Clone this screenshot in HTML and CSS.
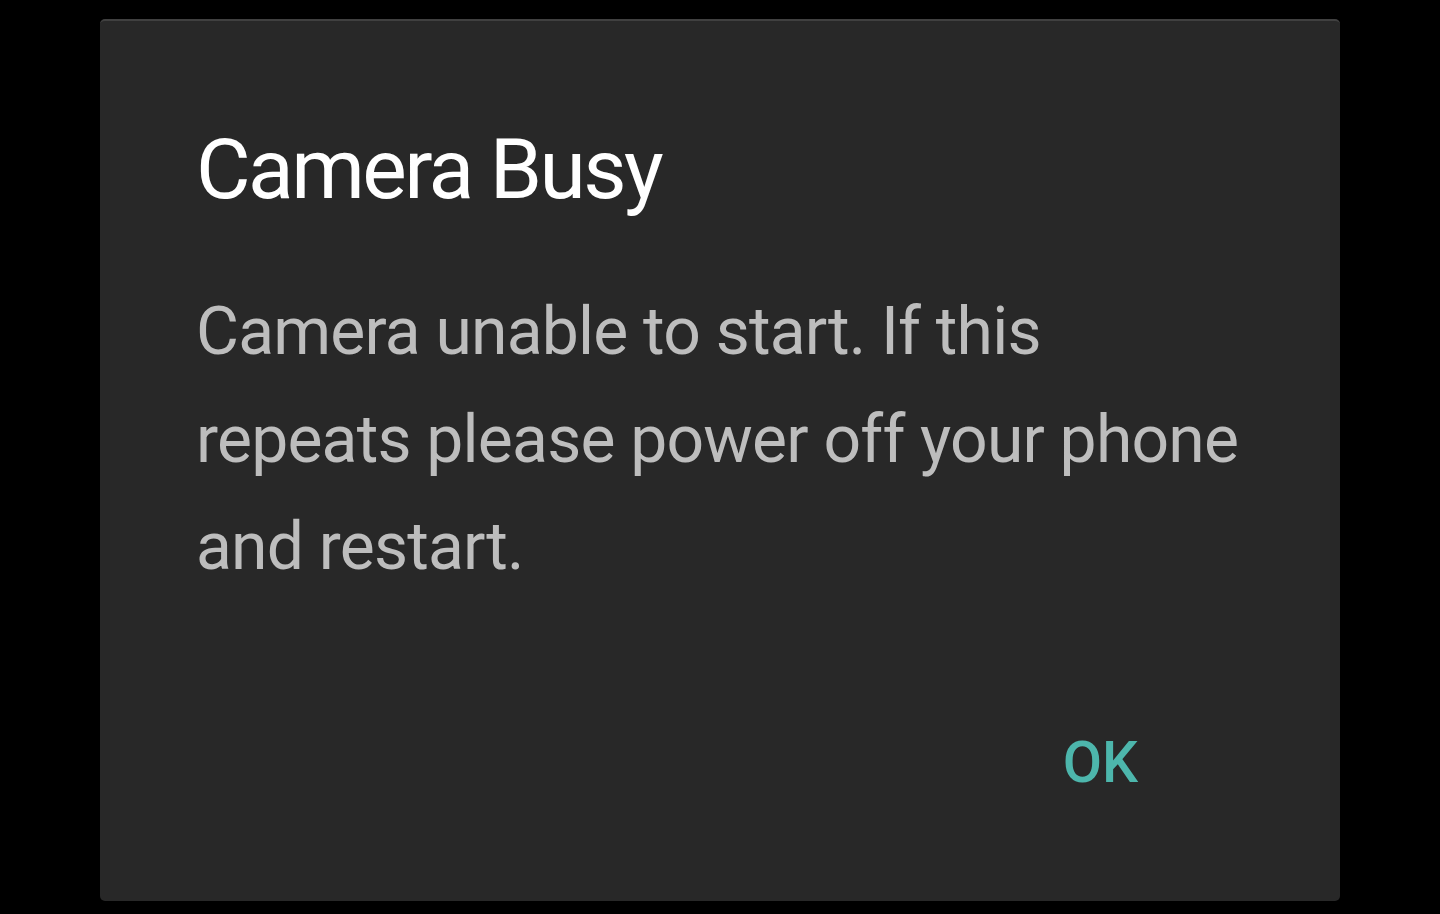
FILE: index.html
```html
<!DOCTYPE html>
<html>
<head>
<meta charset="utf-8">
<link rel="stylesheet" href="styles.css">
</head>
<body>
<div class="dialog">
  <h1 class="title">Camera Busy</h1>
  <p class="message">Camera unable to start. If this repeats please power off your phone and restart.</p>
  <div class="actions">
    <span class="btn">OK</span>
  </div>
</div>
</body>
</html>
```

FILE: styles.css
```css
html, body {
  margin: 0;
  padding: 0;
  background: #000;
  width: 1440px;
  height: 914px;
  overflow: hidden;
}
body {
  padding-top: 19px;
  padding-left: 100px;
  box-sizing: border-box;
  font-family: Roboto, "Noto Sans", sans-serif;
}
.dialog {
  width: 1240px;
  height: 882px;
  box-sizing: border-box;
  background: #282828;
  border-radius: 5px;
  border-top: 2px solid #404040;
  box-shadow: 0 1px 3px rgba(0,0,0,0.6);
  padding: 0 80px 0 96px;
  display: flex;
  flex-direction: column;
}
.title {
  margin: 0;
  margin-top: 107px;
  font-size: 84px;
  font-weight: 400;
  letter-spacing: -2.6px;
  line-height: 1;
  color: #fff;
}
.message {
  margin: 0;
  margin-top: 66px;
  font-size: 66px;
  letter-spacing: -0.8px;
  line-height: 107.5px;
  color: #bdbdbd;
}
.actions {
  display: flex;
  justify-content: flex-end;
  margin-top: auto;
  margin-bottom: 110px;
}
.btn {
  font-size: 57px;
  font-weight: 500;
  color: #4db6ac;
  margin-right: 122px;
  line-height: 1;
}
```
